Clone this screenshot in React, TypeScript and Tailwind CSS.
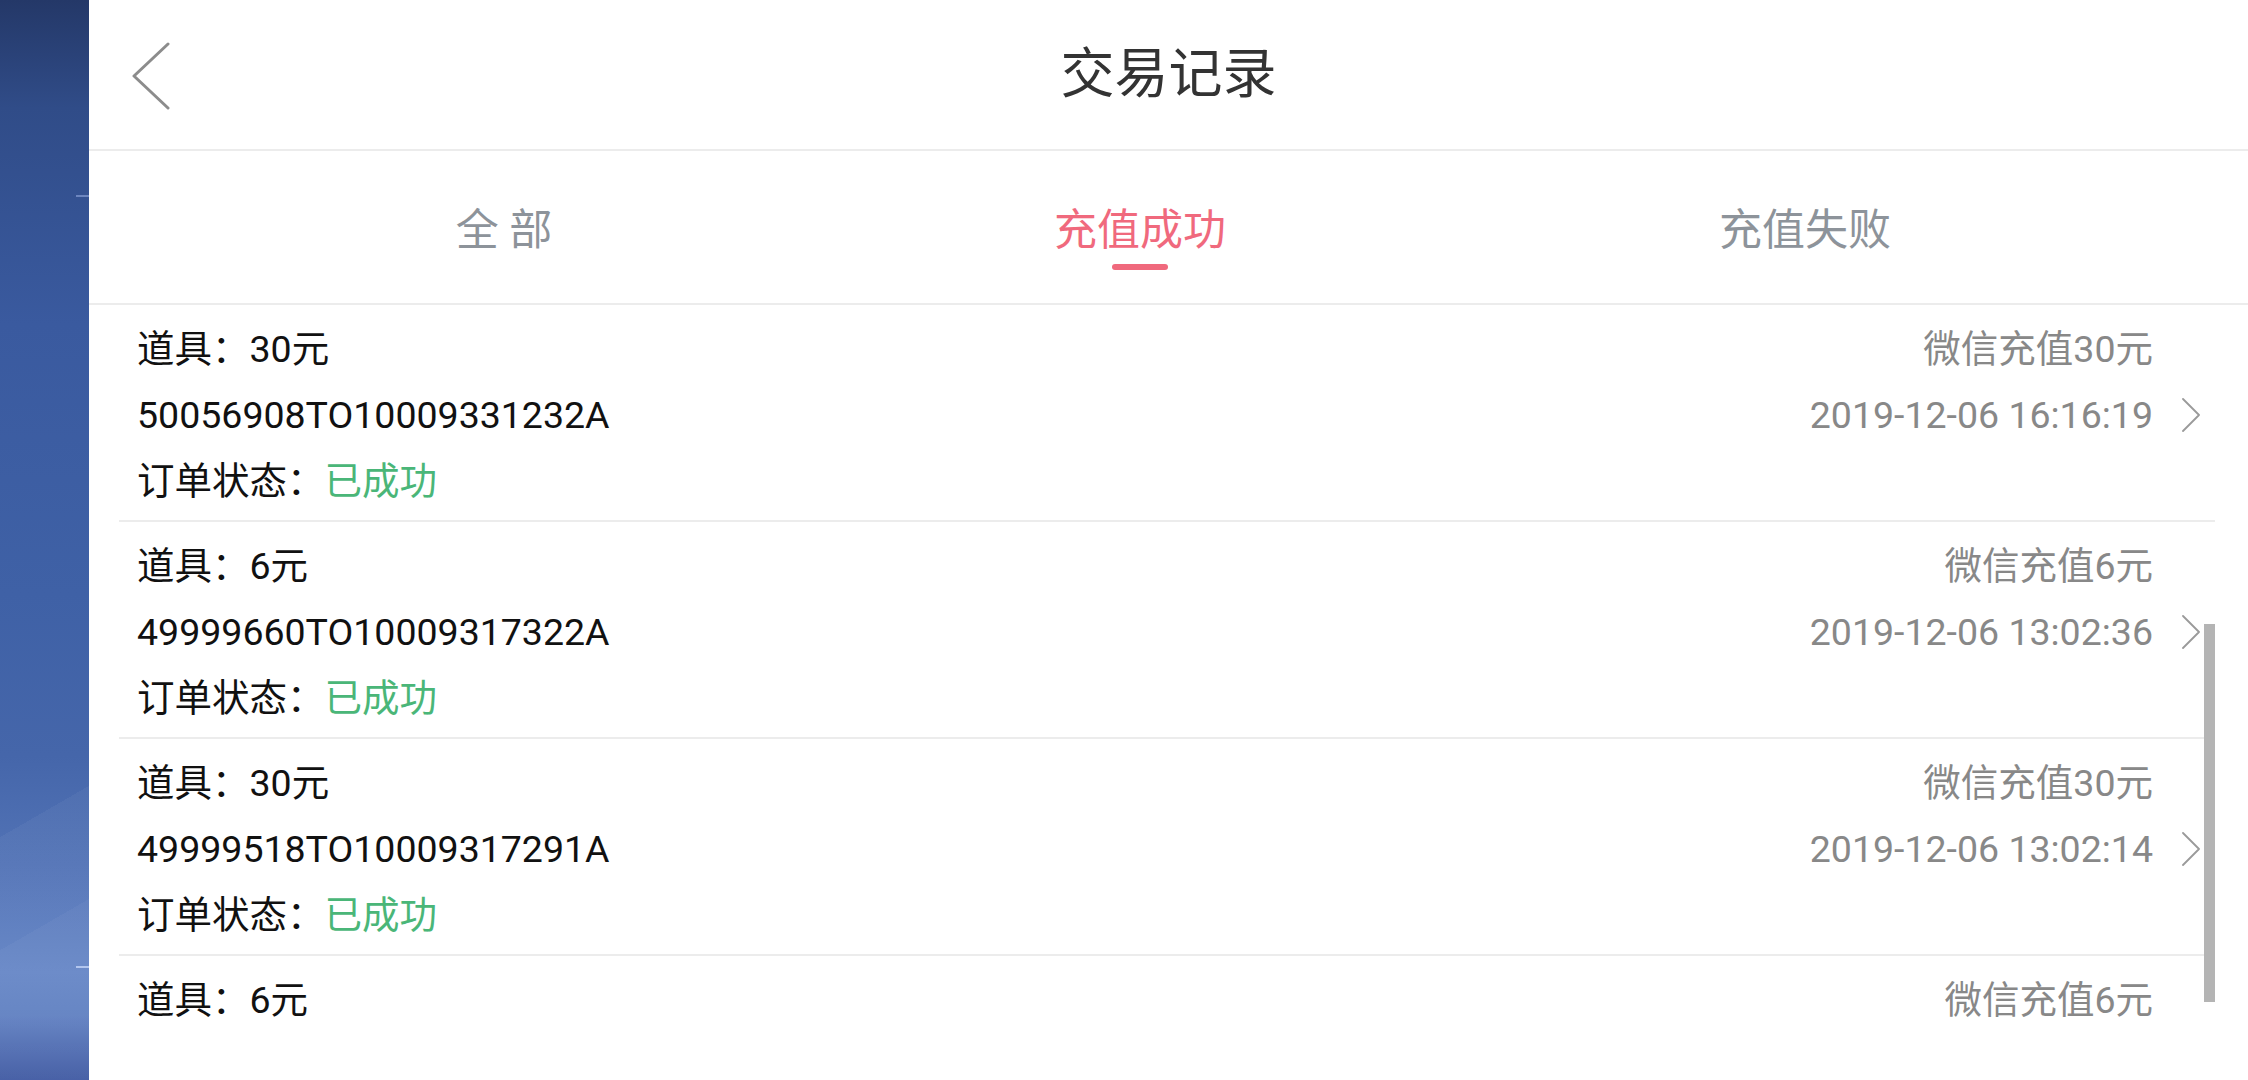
import React from "react";

type Order = {
  item: string;
  orderNo: string;
  channel: string;
  time: string;
  partial?: boolean;
};

const ORDERS: Order[] = [
  { item: "30元", orderNo: "50056908TO10009331232A", channel: "微信充值30元", time: "2019-12-06 16:16:19" },
  { item: "6元", orderNo: "49999660TO10009317322A", channel: "微信充值6元", time: "2019-12-06 13:02:36" },
  { item: "30元", orderNo: "49999518TO10009317291A", channel: "微信充值30元", time: "2019-12-06 13:02:14" },
  // last row is only half scrolled into view
  { item: "6元", orderNo: "49999377TO10009317265A", channel: "微信充值6元", time: "2019-12-06 13:01:52", partial: true },
];

const TABS = [
  { label: "全 部", active: false, w: "w-[636px]" },
  { label: "充值成功", active: true, w: "w-[636px]" },
  { label: "充值失败", active: false, w: "w-[694px]" },
];

function BackIcon() {
  return (
    <svg width="38" height="68" viewBox="0 0 38 68" fill="none" aria-hidden="true">
      <polyline points="36,2 2,34 36,66" stroke="#8c8c8c" strokeWidth="3" strokeLinecap="round" strokeLinejoin="round" />
    </svg>
  );
}

function ChevronRight() {
  return (
    <svg width="20" height="34" viewBox="0 0 20 34" fill="none" aria-hidden="true">
      <polyline points="2,1 18,17 2,33" stroke="#9a9a9a" strokeWidth="1.8" strokeLinecap="round" strokeLinejoin="round" />
    </svg>
  );
}

function OrderRow({ order }: { order: Order }) {
  return (
    <li className={`flex pl-[18px] pr-[14px] pt-[11px] pb-[6px] ${order.partial ? "" : "border-b-2 border-[#ececec]"}`}>
      {/* left side */}
      <div className="flex flex-1 flex-col text-[37.5px] text-[#111]">
        <div className="h-[66px] leading-[66px]">道具：{order.item}</div>
        {!order.partial && (
          <>
            <div className="h-[66px] leading-[66px]">{order.orderNo}</div>
            <div className="h-[66px] leading-[66px]">
              订单状态：<span className="text-[#4ab678]">已成功</span>
            </div>
          </>
        )}
      </div>
      {/* right side */}
      <div className="flex flex-col text-[37.5px] text-[#888888]">
        <div className="flex h-[66px] items-center justify-end leading-[66px]">
          <span>{order.channel}</span>
          <span className="w-[48px]" />
        </div>
        {!order.partial && (
          <div className="flex h-[66px] items-center justify-end leading-[66px]">
            <span>{order.time}</span>
            <span className="flex w-[48px] justify-end">
              <ChevronRight />
            </span>
          </div>
        )}
      </div>
    </li>
  );
}

export default function App() {
  return (
    <div className="flex h-[1080px] w-[2248px] overflow-hidden font-['Roboto','Noto_Sans_CJK_SC',sans-serif]">
      {/* wallpaper strip of the split screen */}
      <div className="relative w-[89px] shrink-0 bg-[linear-gradient(180deg,#243868_0%,#304c88_10%,#3a5a9f_30%,#3f61a6_55%,#4566aa_70%,#5273b6_80%,#6283c5_90%,#5c7dc0_94%,#3b55a0_100%)]">
        <div className="absolute inset-0 bg-[linear-gradient(150deg,transparent_74%,rgba(255,255,255,0.04)_74%,rgba(255,255,255,0.04)_84%,rgba(255,255,255,0.07)_84%)]" />
        <div className="absolute right-0 top-[195px] h-[2px] w-[13px] bg-[#6d86bf]" />
        <div className="absolute right-0 top-[966px] h-[2px] w-[13px] bg-[#b3c6ee]" />
      </div>

      <main className="flex flex-1 flex-col bg-white">
        {/* header */}
        <header className="grid h-[151px] shrink-0 grid-cols-[1fr_auto_1fr] items-center border-b-2 border-[#ececec]">
          <div className="pl-[43px] pt-[2px]">
            <BackIcon />
          </div>
          <h1 className="text-[54px] leading-none text-[#333333]">交易记录</h1>
          <div />
        </header>

        {/* tabs */}
        <nav className="flex h-[154px] shrink-0 border-b-2 border-[#ececec] pl-[97px]">
          {TABS.map((t) => (
            <div key={t.label} className={`flex ${t.w} flex-col items-center pt-[58px]`}>
              <span className={`text-[43px] leading-[43px] ${t.active ? "text-[#f0697d]" : "text-[#8d939a]"}`}>
                {t.label}
              </span>
              {t.active && <span className="mt-[12px] h-[6px] w-[56px] rounded-full bg-[#f0697d]" />}
            </div>
          ))}
        </nav>

        {/* list */}
        <section className="relative flex-1 overflow-hidden">
          <ul className="ml-[30px] mr-[33px]">
            {ORDERS.map((o) => (
              <OrderRow key={o.orderNo} order={o} />
            ))}
          </ul>
          {/* scrollbar thumb */}
          <div className="absolute right-[33px] top-[319px] h-[378px] w-[11px] bg-[#b4b4b4]" />
        </section>
      </main>
    </div>
  );
}
